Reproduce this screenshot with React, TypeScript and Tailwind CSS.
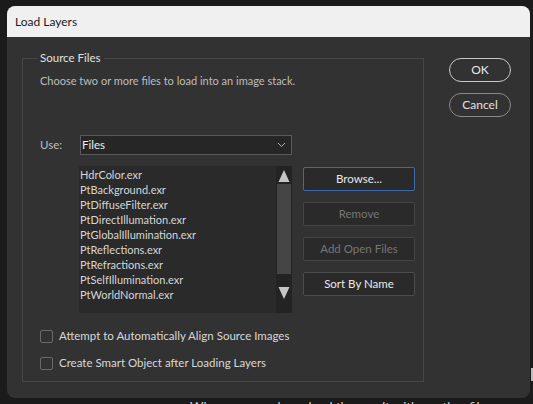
import React from "react";

const files = [
  "HdrColor.exr",
  "PtBackground.exr",
  "PtDiffuseFilter.exr",
  "PtDirectIllumation.exr",
  "PtGlobalIllumination.exr",
  "PtReflections.exr",
  "PtRefractions.exr",
  "PtSelfIllumination.exr",
  "PtWorldNormal.exr",
];

function SideButton({
  children,
  disabled,
  focused,
}: {
  children: React.ReactNode;
  disabled?: boolean;
  focused?: boolean;
}) {
  return (
    <button
      className={
        "h-[24px] w-[112px] rounded-[2px] border bg-[#2a2a2a] text-[11.5px] " +
        (focused
          ? "border-[#3c6bab] text-[#e8e8e8]"
          : disabled
            ? "border-[#444444] text-[#767676]"
            : "border-[#4c4c4c] text-[#e8e8e8]")
      }
    >
      {children}
    </button>
  );
}

function Check({ label }: { label: string }) {
  return (
    <label className="flex h-[16px] items-center gap-[6px]">
      <span className="h-[13px] w-[13px] rounded-[2px] border border-[#6a6a6a]" />
      <span className="text-[11.5px] text-[#d8d8d8]">{label}</span>
    </label>
  );
}

export default function App() {
  return (
    <div
      className="h-[404px] w-[533px] overflow-hidden bg-[#1b1b1b] pl-[7px] pt-[6px]"
      style={{ fontFamily: 'Lato, "Noto Sans", sans-serif' }}
    >
      <div className="flex">
        <div className="flex h-[392px] w-[524px] flex-col overflow-hidden rounded-[8px] bg-[#323232]">
          {/* title bar */}
          <div className="flex h-[31px] items-center bg-[#f0f0f0] pl-[8px] text-[12px] text-[#1a1a1a]">
            Load Layers
          </div>

          <div className="flex pl-[15px] pt-[13px]">
            <fieldset className="h-[332px] w-[402px] border border-[#474747] pl-[14px]">
              <legend className="px-[3px] text-[11.5px] leading-[16px] text-[#e0e0e0]">
                Source Files
              </legend>
              <div className="pl-[3px]">
                <p className="mt-[7px] text-[11px] leading-[16px] text-[#bdbdbd]">
                  Choose two or more files to load into an image stack.
                </p>

                <div className="mt-[46px] flex items-center">
                  <span className="w-[40px] text-[11.5px] text-[#bdbdbd]">Use:</span>
                  <div className="flex h-[20px] w-[212px] items-center justify-between border border-[#5a5a5a] bg-[#262626] pl-[1px] pr-[5px] text-[11.5px] text-[#eeeeee]">
                    <span>Files</span>
                    <svg width="9" height="6" viewBox="0 0 9 6" fill="none">
                      <path d="M1 1l3.5 3.5L8 1" stroke="#b0b0b0" strokeWidth="1" />
                    </svg>
                  </div>
                </div>

                <div className="mt-[11px] flex">
                  <div className="ml-[39px] flex h-[147px] w-[213px] bg-[#2a2a2a]">
                    <ul className="flex-1 pl-[1px] pt-[1px] text-[11px] leading-[15px] text-[#d6d6d6]">
                      {files.map((f) => (
                        <li key={f}>{f}</li>
                      ))}
                    </ul>
                    <div className="flex w-[16px] flex-col items-center bg-[#232323]">
                      <svg width="12" height="14" viewBox="0 0 12 14" className="mt-[3px]">
                        <path d="M6 1L11.5 13H0.5Z" fill="#c6c6c6" />
                      </svg>
                      <div className="mt-[1px] h-[90px] w-[14px] bg-[#454545]" />
                      <svg width="12" height="14" viewBox="0 0 12 14" className="mt-[12px]">
                        <path d="M0.5 1H11.5L6 13Z" fill="#c6c6c6" />
                      </svg>
                    </div>
                  </div>

                  <div className="ml-[11px] mt-[1px] flex flex-col gap-[11px]">
                    <SideButton focused>Browse...</SideButton>
                    <SideButton disabled>Remove</SideButton>
                    <SideButton disabled>Add Open Files</SideButton>
                    <SideButton>Sort By Name</SideButton>
                  </div>
                </div>

                <div className="mt-[15px] flex flex-col gap-[11px]">
                  <Check label="Attempt to Automatically Align Source Images" />
                  <Check label="Create Smart Object after Loading Layers" />
                </div>
              </div>
            </fieldset>

            <div className="ml-[25px] mt-[8px] flex flex-col gap-[11px]">
              <button className="h-[24px] w-[62px] rounded-full border border-[#c8c8c8] text-[12px] text-[#e8e8e8]">
                OK
              </button>
              <button className="h-[24px] w-[62px] rounded-full border border-[#8a8a8a] text-[12px] text-[#e0e0e0]">
                Cancel
              </button>
            </div>
          </div>
        </div>
        <div className="ml-[1px] mt-[362px] h-[13px] w-[2px] bg-[#bdbdbd]" />
      </div>
      <div className="ml-[183px] mt-[1px] text-[13px] leading-[16px] text-[#cfcfcf]">
        When you are done, load the result with another file
      </div>
    </div>
  );
}
